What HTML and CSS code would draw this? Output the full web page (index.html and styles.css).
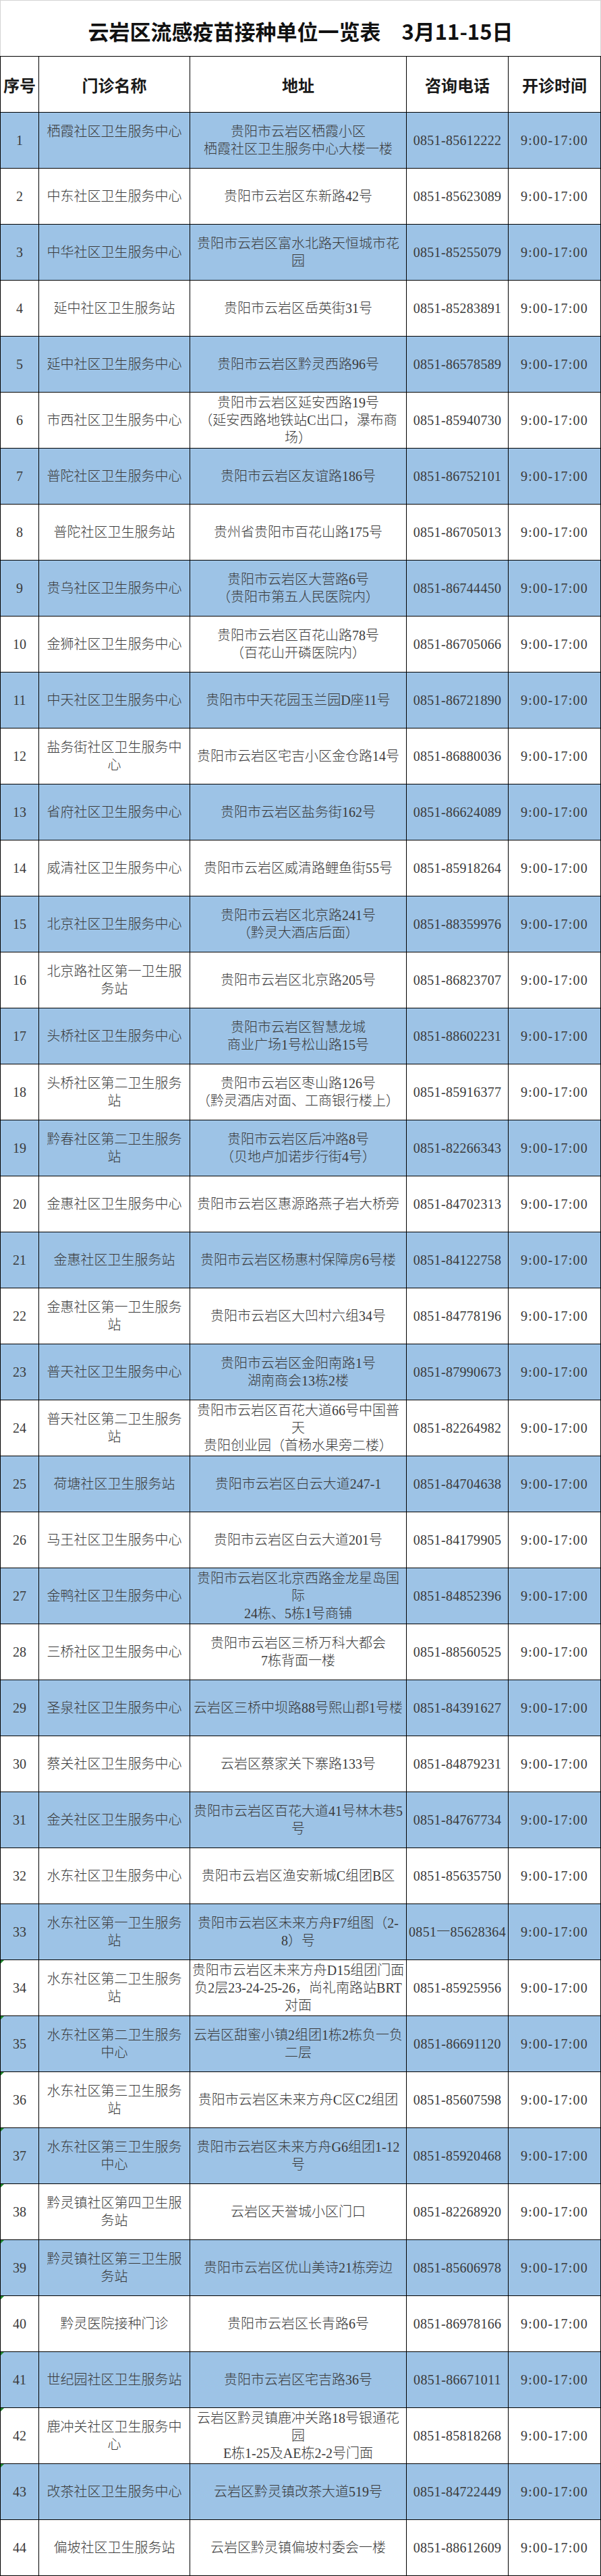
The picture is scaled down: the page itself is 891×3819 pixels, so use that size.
FILE: index.html
```html
<!DOCTYPE html>
<html lang="zh-CN">
<head>
<meta charset="utf-8">
<title>云岩区流感疫苗接种单位一览表</title>
<link rel="stylesheet" href="styles.css">
</head>
<body>
<div class="sheet">
  <div class="title">云岩区流感疫苗接种单位一览表<span class="date">3月11-15日</span></div>
  <div class="grid">
    <div class="hd">序号</div><div class="hd">门诊名称</div><div class="hd">地址</div><div class="hd">咨询电话</div><div class="hd">开诊时间</div>

    <div class="row blue"><div class="c num">1</div><div class="c">栖霞社区卫生服务中心<br>&nbsp;</div><div class="c">贵阳市云岩区栖霞小区<br>栖霞社区卫生服务中心大楼一楼</div><div class="c tel">0851-85612222</div><div class="c time">9:00-17:00</div></div>
    <div class="row"><div class="c num">2</div><div class="c">中东社区卫生服务中心</div><div class="c">贵阳市云岩区东新路42号</div><div class="c tel">0851-85623089</div><div class="c time">9:00-17:00</div></div>
    <div class="row blue"><div class="c num">3</div><div class="c">中华社区卫生服务中心</div><div class="c">贵阳市云岩区富水北路天恒城市花<br>园</div><div class="c tel">0851-85255079</div><div class="c time">9:00-17:00</div></div>
    <div class="row"><div class="c num">4</div><div class="c">延中社区卫生服务站</div><div class="c">贵阳市云岩区岳英街31号</div><div class="c tel">0851-85283891</div><div class="c time">9:00-17:00</div></div>
    <div class="row blue"><div class="c num">5</div><div class="c">延中社区卫生服务中心</div><div class="c">贵阳市云岩区黔灵西路96号</div><div class="c tel">0851-86578589</div><div class="c time">9:00-17:00</div></div>
    <div class="row"><div class="c num">6</div><div class="c">市西社区卫生服务中心</div><div class="c">贵阳市云岩区延安西路19号<br>（延安西路地铁站C出口，瀑布商<br>场）</div><div class="c tel">0851-85940730</div><div class="c time">9:00-17:00</div></div>
    <div class="row blue"><div class="c num">7</div><div class="c">普陀社区卫生服务中心</div><div class="c">贵阳市云岩区友谊路186号</div><div class="c tel">0851-86752101</div><div class="c time">9:00-17:00</div></div>
    <div class="row"><div class="c num">8</div><div class="c">普陀社区卫生服务站</div><div class="c">贵州省贵阳市百花山路175号</div><div class="c tel">0851-86705013</div><div class="c time">9:00-17:00</div></div>
    <div class="row blue"><div class="c num">9</div><div class="c">贵乌社区卫生服务中心</div><div class="c">贵阳市云岩区大营路6号<br>（贵阳市第五人民医院内）</div><div class="c tel">0851-86744450</div><div class="c time">9:00-17:00</div></div>
    <div class="row"><div class="c num">10</div><div class="c">金狮社区卫生服务中心</div><div class="c">贵阳市云岩区百花山路78号<br>（百花山开磷医院内）</div><div class="c tel">0851-86705066</div><div class="c time">9:00-17:00</div></div>
    <div class="row blue"><div class="c num">11</div><div class="c">中天社区卫生服务中心</div><div class="c">贵阳市中天花园玉兰园D座11号</div><div class="c tel">0851-86721890</div><div class="c time">9:00-17:00</div></div>
    <div class="row"><div class="c num">12</div><div class="c">盐务街社区卫生服务中<br>心</div><div class="c">贵阳市云岩区宅吉小区金仓路14号</div><div class="c tel">0851-86880036</div><div class="c time">9:00-17:00</div></div>
    <div class="row blue"><div class="c num">13</div><div class="c">省府社区卫生服务中心</div><div class="c">贵阳市云岩区盐务街162号</div><div class="c tel">0851-86624089</div><div class="c time">9:00-17:00</div></div>
    <div class="row"><div class="c num">14</div><div class="c">威清社区卫生服务中心</div><div class="c">贵阳市云岩区威清路鲤鱼街55号</div><div class="c tel">0851-85918264</div><div class="c time">9:00-17:00</div></div>
    <div class="row blue"><div class="c num">15</div><div class="c">北京社区卫生服务中心</div><div class="c">贵阳市云岩区北京路241号<br>（黔灵大酒店后面）</div><div class="c tel">0851-88359976</div><div class="c time">9:00-17:00</div></div>
    <div class="row"><div class="c num">16</div><div class="c">北京路社区第一卫生服<br>务站</div><div class="c">贵阳市云岩区北京路205号</div><div class="c tel">0851-86823707</div><div class="c time">9:00-17:00</div></div>
    <div class="row blue"><div class="c num">17</div><div class="c">头桥社区卫生服务中心</div><div class="c">贵阳市云岩区智慧龙城<br>商业广场1号松山路15号</div><div class="c tel">0851-88602231</div><div class="c time">9:00-17:00</div></div>
    <div class="row"><div class="c num">18</div><div class="c">头桥社区第二卫生服务<br>站</div><div class="c">贵阳市云岩区枣山路126号<br>（黔灵酒店对面、工商银行楼上）</div><div class="c tel">0851-85916377</div><div class="c time">9:00-17:00</div></div>
    <div class="row blue"><div class="c num">19</div><div class="c">黔春社区第二卫生服务<br>站</div><div class="c">贵阳市云岩区后冲路8号<br>（贝地卢加诺步行街4号）</div><div class="c tel">0851-82266343</div><div class="c time">9:00-17:00</div></div>
    <div class="row"><div class="c num">20</div><div class="c">金惠社区卫生服务中心</div><div class="c">贵阳市云岩区惠源路燕子岩大桥旁</div><div class="c tel">0851-84702313</div><div class="c time">9:00-17:00</div></div>
    <div class="row blue"><div class="c num">21</div><div class="c">金惠社区卫生服务站</div><div class="c">贵阳市云岩区杨惠村保障房6号楼</div><div class="c tel">0851-84122758</div><div class="c time">9:00-17:00</div></div>
    <div class="row"><div class="c num">22</div><div class="c">金惠社区第一卫生服务<br>站</div><div class="c">贵阳市云岩区大凹村六组34号</div><div class="c tel">0851-84778196</div><div class="c time">9:00-17:00</div></div>
    <div class="row blue"><div class="c num">23</div><div class="c">普天社区卫生服务中心</div><div class="c">贵阳市云岩区金阳南路1号<br>湖南商会13栋2楼</div><div class="c tel">0851-87990673</div><div class="c time">9:00-17:00</div></div>
    <div class="row"><div class="c num">24</div><div class="c">普天社区第二卫生服务<br>站</div><div class="c">贵阳市云岩区百花大道66号中国普<br>天<br>贵阳创业园（首杨水果旁二楼）</div><div class="c tel">0851-82264982</div><div class="c time">9:00-17:00</div></div>
    <div class="row blue"><div class="c num">25</div><div class="c">荷塘社区卫生服务站</div><div class="c">贵阳市云岩区白云大道247-1</div><div class="c tel">0851-84704638</div><div class="c time">9:00-17:00</div></div>
    <div class="row"><div class="c num">26</div><div class="c">马王社区卫生服务中心</div><div class="c">贵阳市云岩区白云大道201号</div><div class="c tel">0851-84179905</div><div class="c time">9:00-17:00</div></div>
    <div class="row blue"><div class="c num">27</div><div class="c">金鸭社区卫生服务中心</div><div class="c">贵阳市云岩区北京西路金龙星岛国<br>际<br>24栋、5栋1号商铺</div><div class="c tel">0851-84852396</div><div class="c time">9:00-17:00</div></div>
    <div class="row"><div class="c num">28</div><div class="c">三桥社区卫生服务中心</div><div class="c">贵阳市云岩区三桥万科大都会<br>7栋背面一楼</div><div class="c tel">0851-88560525</div><div class="c time">9:00-17:00</div></div>
    <div class="row blue"><div class="c num">29</div><div class="c">圣泉社区卫生服务中心</div><div class="c">云岩区三桥中坝路88号熙山郡1号楼</div><div class="c tel">0851-84391627</div><div class="c time">9:00-17:00</div></div>
    <div class="row"><div class="c num">30</div><div class="c">蔡关社区卫生服务中心</div><div class="c">云岩区蔡家关下寨路133号</div><div class="c tel">0851-84879231</div><div class="c time">9:00-17:00</div></div>
    <div class="row blue"><div class="c num">31</div><div class="c">金关社区卫生服务中心</div><div class="c">贵阳市云岩区百花大道41号林木巷5<br>号</div><div class="c tel">0851-84767734</div><div class="c time">9:00-17:00</div></div>
    <div class="row"><div class="c num">32</div><div class="c">水东社区卫生服务中心</div><div class="c">贵阳市云岩区渔安新城C组团B区</div><div class="c tel">0851-85635750</div><div class="c time">9:00-17:00</div></div>
    <div class="row blue"><div class="c num">33</div><div class="c">水东社区第一卫生服务<br>站</div><div class="c">贵阳市云岩区未来方舟F7组图（2-<br>8）号</div><div class="c tel">0851一85628364</div><div class="c time">9:00-17:00</div></div>
    <div class="row"><div class="c num flag">34</div><div class="c">水东社区第二卫生服务<br>站</div><div class="c">贵阳市云岩区未来方舟D15组团门面<br>负2层23-24-25-26，尚礼南路站BRT<br>对面</div><div class="c tel">0851-85925956</div><div class="c time">9:00-17:00</div></div>
    <div class="row blue"><div class="c num flag">35</div><div class="c">水东社区第二卫生服务<br>中心</div><div class="c">云岩区甜蜜小镇2组团1栋2栋负一负<br>二层</div><div class="c tel">0851-86691120</div><div class="c time">9:00-17:00</div></div>
    <div class="row"><div class="c num flag">36</div><div class="c">水东社区第三卫生服务<br>站</div><div class="c">贵阳市云岩区未来方舟C区C2组团</div><div class="c tel">0851-85607598</div><div class="c time">9:00-17:00</div></div>
    <div class="row blue"><div class="c num flag">37</div><div class="c">水东社区第三卫生服务<br>中心</div><div class="c">贵阳市云岩区未来方舟G6组团1-12<br>号</div><div class="c tel">0851-85920468</div><div class="c time">9:00-17:00</div></div>
    <div class="row"><div class="c num flag">38</div><div class="c">黔灵镇社区第四卫生服<br>务站</div><div class="c">云岩区天誉城小区门口</div><div class="c tel">0851-82268920</div><div class="c time">9:00-17:00</div></div>
    <div class="row blue"><div class="c num flag">39</div><div class="c">黔灵镇社区第三卫生服<br>务站</div><div class="c">贵阳市云岩区优山美诗21栋旁边</div><div class="c tel">0851-85606978</div><div class="c time">9:00-17:00</div></div>
    <div class="row"><div class="c num flag">40</div><div class="c">黔灵医院接种门诊</div><div class="c">贵阳市云岩区长青路6号</div><div class="c tel">0851-86978166</div><div class="c time">9:00-17:00</div></div>
    <div class="row blue"><div class="c num flag">41</div><div class="c">世纪园社区卫生服务站</div><div class="c">贵阳市云岩区宅吉路36号</div><div class="c tel">0851-86671011</div><div class="c time">9:00-17:00</div></div>
    <div class="row"><div class="c num flag">42</div><div class="c">鹿冲关社区卫生服务中<br>心</div><div class="c">云岩区黔灵镇鹿冲关路18号银通花<br>园<br>E栋1-25及AE栋2-2号门面</div><div class="c tel">0851-85818268</div><div class="c time">9:00-17:00</div></div>
    <div class="row blue"><div class="c num flag">43</div><div class="c">改茶社区卫生服务中心</div><div class="c">云岩区黔灵镇改茶大道519号</div><div class="c tel">0851-84722449</div><div class="c time">9:00-17:00</div></div>
    <div class="row"><div class="c num">44</div><div class="c">偏坡社区卫生服务站</div><div class="c">云岩区黔灵镇偏坡村委会一楼</div><div class="c tel">0851-88612609</div><div class="c time">9:00-17:00</div></div>
  </div>
</div>
</body>
</html>
```

FILE: styles.css
```css
html, body {
  margin: 0;
  padding: 0;
  background: #ffffff;
}

.sheet {
  width: 891px;
}

.title {
  box-sizing: border-box;
  height: 83px;
  border: 1px solid #d4d4d4;
  border-bottom: none;
  display: flex;
  align-items: center;
  justify-content: center;
  padding-top: 6px;
  font-family: "Noto Sans CJK SC", "Noto Sans", sans-serif;
  font-weight: 700;
  font-size: 31px;
  color: #111111;
  white-space: nowrap;
}

.title .date {
  margin-left: 1em;
}

.grid {
  box-sizing: border-box;
  width: 891px;
  display: grid;
  grid-template-columns: 56px 223px 320px 150px 136px;
  grid-auto-rows: 82px;
  gap: 1px;
  background: #000000;
  border: 1px solid #000000;
}

.row {
  display: contents;
}

.hd,
.c {
  display: flex;
  align-items: center;
  justify-content: center;
  text-align: center;
  background: #ffffff;
  white-space: nowrap;
}

.hd {
  font-family: "Noto Sans CJK SC", "Noto Sans", sans-serif;
  font-weight: 700;
  font-size: 24px;
  color: #1a1a1a;
}

.c {
  position: relative;
  font-family: "Liberation Serif", "Noto Sans CJK SC", serif;
  font-weight: 300;
  font-size: 20px;
  line-height: 26px;
  color: #3a3a3a;
}

.row.blue > .c {
  background: #9dc3e6;
}

.c.time {
  letter-spacing: 1.2px;
}

.c.tel {
  letter-spacing: 0.3px;
}

.c.flag::before {
  content: "";
  position: absolute;
  left: 0;
  top: 0;
  width: 0;
  height: 0;
  border-top: 5px solid #1f8a2e;
  border-right: 5px solid transparent;
}
```
